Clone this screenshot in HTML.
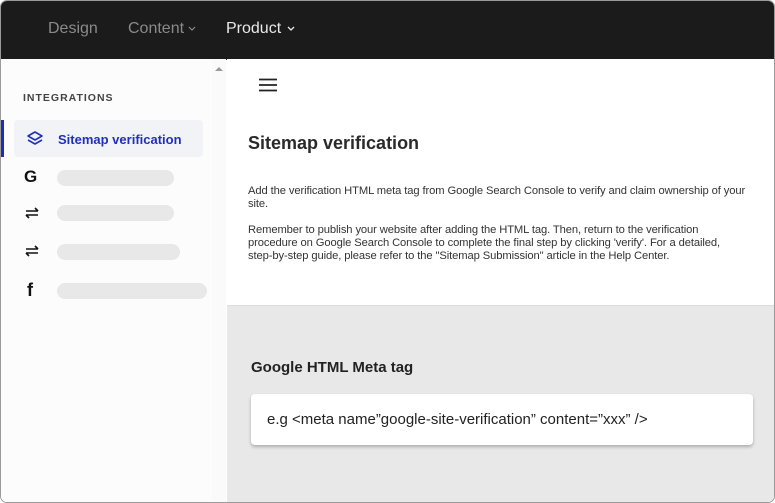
<!DOCTYPE html>
<html><head><style>
*{margin:0;padding:0;box-sizing:border-box}
body{width:775px;height:503px;overflow:hidden;background:#fff;font-family:"Liberation Sans",Arial,sans-serif;position:relative}
.win{position:absolute;left:0;top:0;width:775px;height:503px;border:1px solid #9a9a9a;border-radius:7px;overflow:hidden;background:#fff}
.top{position:absolute;left:-1px;top:-1px;width:777px;height:60px;background:#1b1b1c}
.top span{position:absolute;top:20px;font-size:16px}
.side{position:absolute;left:-1px;top:58px;width:226px;height:445px;background:#fcfcfc;border-right:1px solid #efefef}
.sb{position:absolute;left:211px;top:58px;width:14px;height:445px;background:#fafafa}
.main{position:absolute;left:226px;top:58px;width:550px;height:246px;background:#fff}
.gray{position:absolute;left:226px;top:304px;width:550px;height:200px;background:#e8e8e8;border-top:1px solid #dcdcdc}
.bar{position:absolute;left:57px;height:16px;border-radius:8px;background:#e8e8e8}
p{font-size:11.2px;color:#333;line-height:13px;letter-spacing:-0.1px}
</style></head><body><div class="win">
<div class="top">
<span style="left:48px;color:#8a8a8a">Design</span>
<span style="left:128px;color:#8a8a8a">Content<svg width="10" height="8" style="margin-left:3px" viewBox="0 0 10 8"><path d="M2 2l3 3 3-3" stroke="#8a8a8a" fill="none" stroke-width="1.2"/></svg></span>
<span style="left:226px;color:#e8e8e8">Product<svg width="12" height="8" style="margin-left:4px" viewBox="0 0 12 8"><path d="M3 2l3 3 3-3" stroke="#e8e8e8" fill="none" stroke-width="1.3"/></svg></span>
</div>
<div class="side">
<div style="position:absolute;left:23px;top:33px;font-size:10.5px;letter-spacing:1px;color:#444;font-weight:bold">INTEGRATIONS</div>
<div style="position:absolute;left:0;top:61px;width:4px;height:37px;background:#1a2bbf"></div>
<div style="position:absolute;left:14px;top:61px;width:189px;height:37px;background:#f2f3f6;border-radius:4px"></div>
<svg style="position:absolute;left:26px;top:71px" width="18" height="18" viewBox="0 0 18 18"><path d="M9 2L2 6l7 4 7-4z M2 10l7 4 7-4" fill="none" stroke="#2130b8" stroke-width="1.6" stroke-linejoin="round"/></svg>
<div style="position:absolute;left:58px;top:73px;font-size:13px;font-weight:bold;color:#2130b8">Sitemap verification</div>
<div style="position:absolute;left:24px;top:108px;font-size:17px;font-weight:bold;color:#111">G</div>
<div class="bar" style="top:111px;width:117px"></div>
<svg style="position:absolute;left:24px;top:147px" width="16" height="14" viewBox="0 0 16 14"><path d="M2 5h12M11 2l3 3M14 9H2M5 12L2 9" fill="none" stroke="#111" stroke-width="1.6"/></svg>
<div class="bar" style="top:146px;width:117px"></div>
<svg style="position:absolute;left:24px;top:185px" width="16" height="14" viewBox="0 0 16 14"><path d="M2 5h12M11 2l3 3M14 9H2M5 12L2 9" fill="none" stroke="#111" stroke-width="1.6"/></svg>
<div class="bar" style="top:185px;width:123px"></div>
<div style="position:absolute;left:27px;top:221px;font-size:18px;font-weight:bold;color:#111">f</div>
<div class="bar" style="top:224px;width:150px"></div>
</div>
<div class="sb"><svg style="position:absolute;left:3px;top:7px" width="8" height="6"><path d="M0 5L4 1 8 5z" fill="#999"/></svg></div>
<div class="main">
<svg style="position:absolute;left:32px;top:19px" width="18" height="14"><path d="M0 1.5h18M0 7h18M0 12.5h18" stroke="#222" stroke-width="1.8"/></svg>
<div style="position:absolute;left:21px;top:74px;font-size:18px;font-weight:bold;color:#2a2a2a">Sitemap verification</div>
<p style="position:absolute;left:21px;top:126px;width:512px">Add the verification HTML meta tag from Google Search Console to verify and claim ownership of your site.</p>
<p style="position:absolute;left:21px;top:165px;width:495px">Remember to publish your website after adding the HTML tag. Then, return to the verification procedure on Google Search Console to complete the final step by clicking 'verify'. For a detailed, step-by-step guide, please refer to the "Sitemap Submission" article in the Help Center.</p>
</div>
<div class="gray">
<div style="position:absolute;left:24px;top:53px;font-size:15px;font-weight:bold;color:#222">Google HTML Meta tag</div>
<div style="position:absolute;left:24px;top:88px;width:502px;height:51px;background:#fff;border-radius:4px;box-shadow:0 2px 3px rgba(0,0,0,.25);font-size:15px;color:#222;padding:17px 0 0 16px">e.g &lt;meta name”google-site-verification” content=”xxx” /&gt;</div>
</div>
</div></body></html>
